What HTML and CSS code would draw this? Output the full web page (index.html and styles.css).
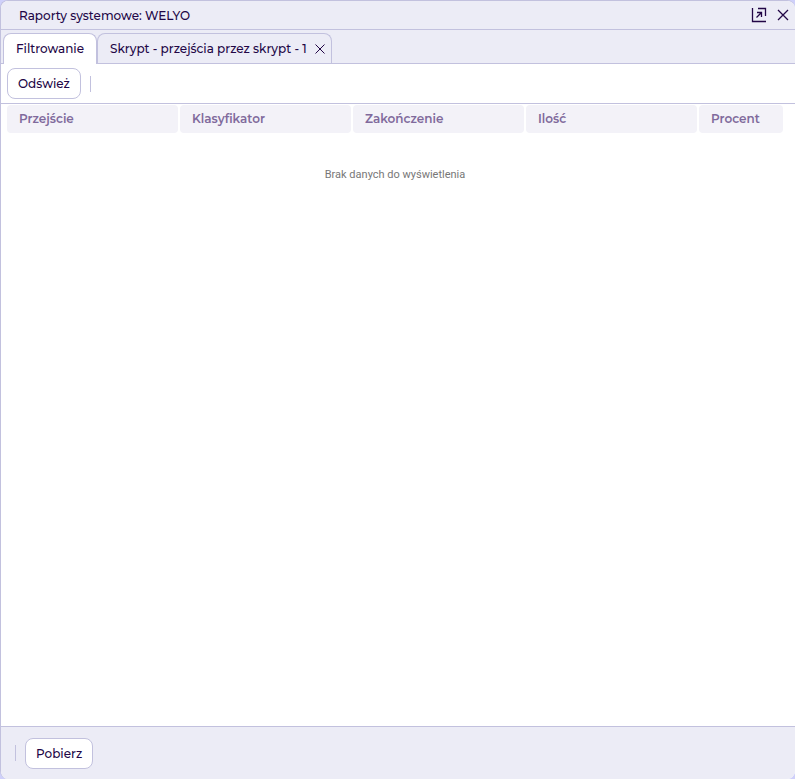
FILE: index.html
```html
<!DOCTYPE html>
<html lang="pl">
<head>
    <meta charset="UTF-8">
    <meta name="viewport" content="width=device-width, initial-scale=1.0">
    <title>Raporty systemowe: WELYO</title>
    <link rel="stylesheet" href="styles.css">
</head>
<body>
    <div class="window">
        <header class="titlebar">
            <h1 class="title">Raporty systemowe: WELYO</h1>
            <div class="window-tools">
                <button type="button" class="icon-btn" aria-label="Otwórz w nowym oknie">
                    <svg width="16" height="16" viewBox="0 0 16 16">
                        <path d="M1.5 1V14.5H15M7 1.5H14.5V9M5.5 10.5L10 6M6 5.5H10.5V10"/>
                    </svg>
                </button>
                <button type="button" class="icon-btn" aria-label="Zamknij">
                    <svg width="12" height="12" viewBox="0 0 12 12"><path d="M1 1L11 11M11 1L1 11"/></svg>
                </button>
            </div>
        </header>

        <nav class="tabs">
            <div class="tab active">
                <button type="button" class="tab-label">Filtrowanie</button>
            </div>
            <div class="tab">
                <button type="button" class="tab-label">Skrypt - przejścia przez skrypt - 1</button>
                <button type="button" class="icon-btn" aria-label="Zamknij kartę">
                    <svg width="10" height="10" viewBox="0 0 10 10"><path d="M0.5 0.5L9.5 9.5M9.5 0.5L0.5 9.5"/></svg>
                </button>
            </div>
        </nav>

        <div class="toolbar">
            <button type="button" class="btn">Odśwież</button>
            <span class="separator"></span>
        </div>

        <main class="content">
            <table class="grid">
                <thead>
                    <tr>
                        <th>Przejście</th>
                        <th>Klasyfikator</th>
                        <th>Zakończenie</th>
                        <th>Ilość</th>
                        <th class="narrow">Procent</th>
                    </tr>
                </thead>
            </table>
            <p class="empty">Brak danych do wyświetlenia</p>
        </main>

        <footer class="footer">
            <span class="separator"></span>
            <button type="button" class="btn">Pobierz</button>
        </footer>
    </div>
</body>
</html>
```
FILE: styles.css
```css
* {
    box-sizing: border-box;
}
body {
    margin: 0;
    background-color: #cfd0fa;
    font-family: Montserrat, Inter, sans-serif;
    font-size: 12px;
    line-height: 16px;
    color: #220646;
}
button {
    font: inherit;
    color: inherit;
    cursor: pointer;
}
.window {
    display: flex;
    flex-direction: column;
    min-height: 100vh;
    background-color: #fff;
    border: 1px solid #c2c1de;
    border-right: none;
    border-bottom: none;
    border-radius: 8px;
    overflow: hidden;
}
.titlebar {
    display: flex;
    align-items: center;
    justify-content: space-between;
    height: 29px;
    padding: 0 6px 0 18px;
    background-color: #ececf6;
    border-bottom: 1px solid #c2c1de;
}
.title {
    margin: 0;
    padding-top: 2px;
    font-size: 12px;
    font-weight: 500;
}
.window-tools {
    display: flex;
    align-items: center;
    gap: 10px;
}
.icon-btn {
    display: flex;
    padding: 0;
    border: none;
    background: none;
}
.icon-btn svg {
    fill: none;
    stroke: #220646;
    stroke-width: 1.3;
}
.tab .icon-btn svg {
    stroke-width: 1;
}
.tabs {
    display: flex;
    align-items: flex-end;
    height: 34px;
    padding: 0 2px;
    background-color: #ececf6;
    border-bottom: 1px solid #c2c1de;
}
.tab {
    display: flex;
    align-items: center;
    gap: 8px;
    height: 30px;
    padding: 0 6px 0 12px;
    border: 1px solid #c2c1de;
    border-bottom: none;
    border-radius: 8px 8px 0 0;
}
.tab.active {
    height: 31px;
    margin-bottom: -1px;
    padding: 0 12px;
    background-color: #fff;
}
.tab-label {
    padding: 0;
    border: none;
    background: none;
    font-weight: 500;
}
.toolbar {
    display: flex;
    align-items: center;
    gap: 9px;
    height: 40px;
    padding: 0 6px;
    border-bottom: 1px solid #c2c1de;
}
.btn {
    height: 31px;
    padding: 1px 10px 0;
    background-color: #fff;
    border: 1px solid #c2c1de;
    border-radius: 8px;
    font-weight: 500;
}
.separator {
    width: 1px;
    height: 16px;
    background-color: #c2c1de;
}
.content {
    flex: 1;
    padding: 0 10px 0 4px;
}
.grid {
    width: 100%;
    table-layout: fixed;
    border-collapse: separate;
    border-spacing: 2px 1px;
}
.grid th {
    height: 28px;
    padding: 0 12px;
    background-color: #f3f2f8;
    border-radius: 4px;
    color: #806a9c;
    font-weight: 600;
    text-align: left;
}
.grid .narrow {
    width: 84px;
}
.empty {
    margin: 33px 0 0;
    color: #777;
    font-family: Roboto, sans-serif;
    font-size: 11px;
    text-align: center;
}
.footer {
    display: flex;
    align-items: center;
    gap: 9px;
    height: 53px;
    padding: 0 14px;
    background-color: #ececf6;
    border-top: 1px solid #c2c1de;
}
```
